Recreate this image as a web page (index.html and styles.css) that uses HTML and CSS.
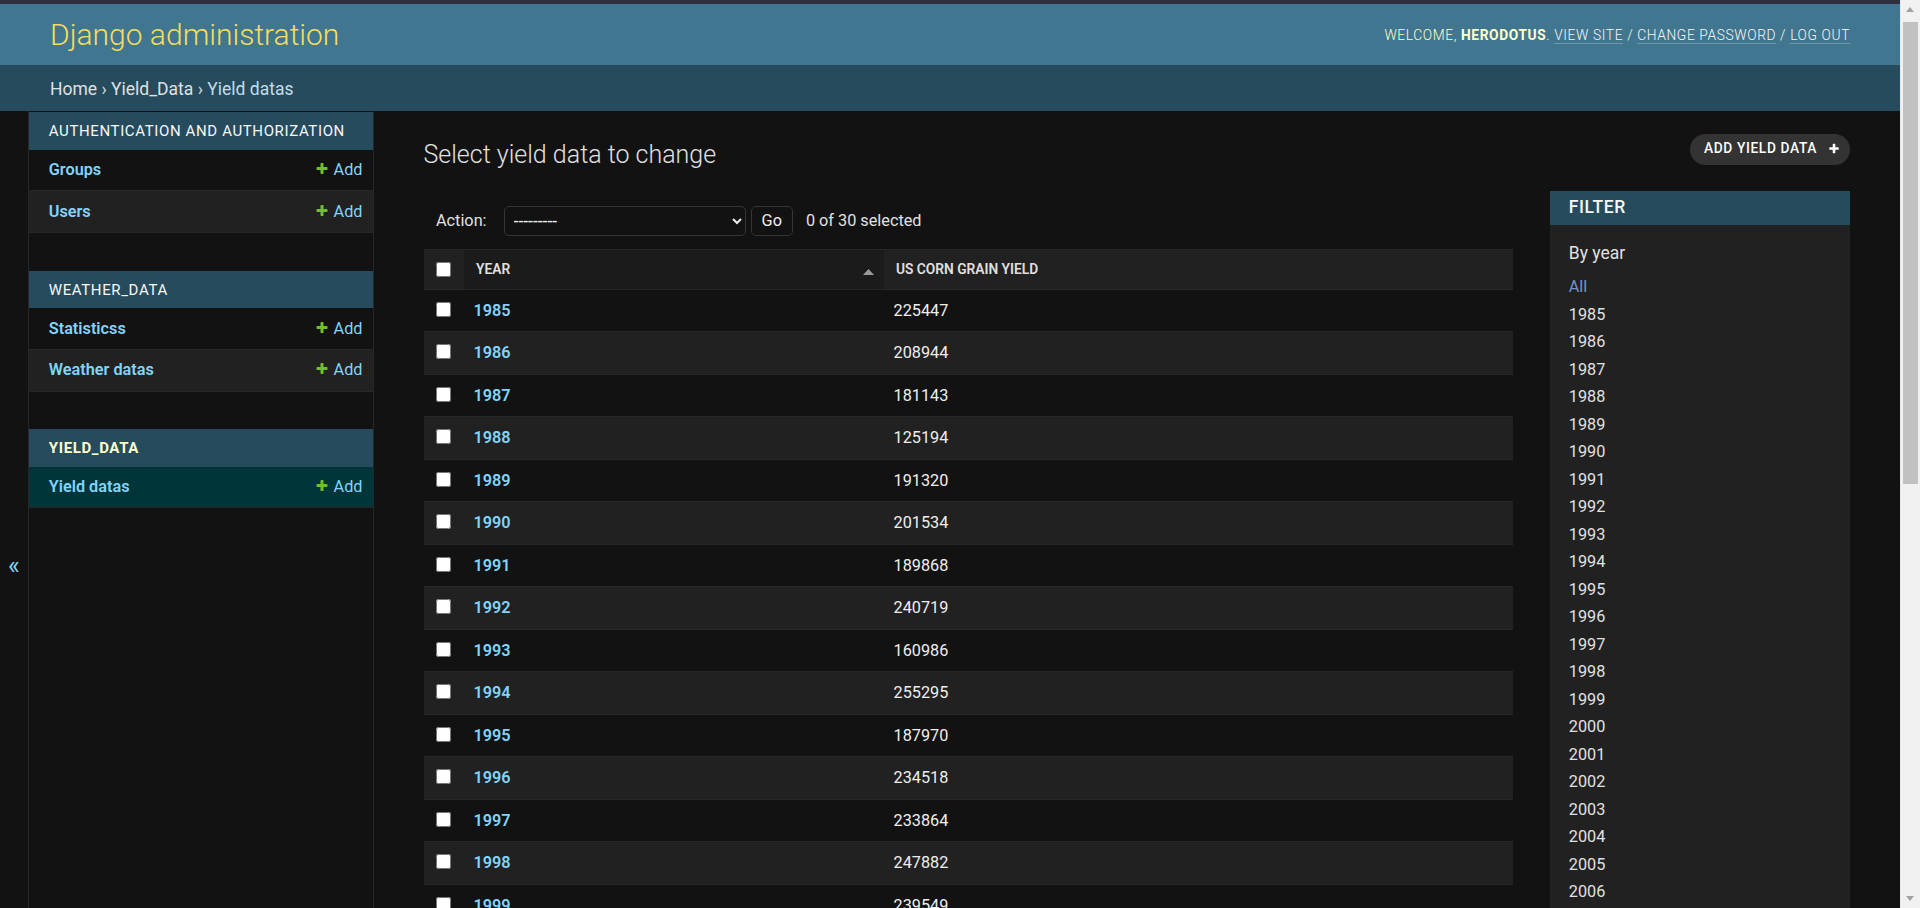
FILE: index.html
```html
<!DOCTYPE html>
<html lang="en">
<head>
<meta charset="utf-8">
<title>Select yield data to change | Django site admin</title>
<link rel="stylesheet" href="styles.css">
</head>
<body>
<div class="window-edge"></div>
<div class="container">
  <header class="header">
    <div class="branding"><h1 class="site-name"><a href="#">Django administration</a></h1></div>
    <div class="user-tools">Welcome, <strong>herodotus</strong>. <a href="#">View site</a> / <a href="#">Change password</a> / <a href="#">Log out</a></div>
  </header>
  <nav class="breadcrumbs"><a href="#">Home</a> › <a href="#">Yield_Data</a> › Yield datas</nav>
  <div class="main">
    <button class="toggle-nav" type="button">«</button>
    <nav class="sidebar">
      <table class="app-table">
        <caption><a href="#" class="section">Authentication and Authorization</a></caption>
        <tr><th><a href="#">Groups</a></th><td><a href="#" class="addlink"><svg class="plus" viewBox="0 0 1792 1792"><path fill="#70bf2b" d="M1600 736v192q0 40-28 68t-68 28h-416v416q0 40-28 68t-68 28h-192q-40 0-68-28t-28-68v-416h-416q-40 0-68-28t-28-68v-192q0-40 28-68t68-28h416v-416q0-40 28-68t68-28h192q40 0 68 28t28 68v416h416q40 0 68 28t28 68z"/></svg>Add</a></td></tr>
        <tr><th><a href="#">Users</a></th><td><a href="#" class="addlink"><svg class="plus" viewBox="0 0 1792 1792"><path fill="#70bf2b" d="M1600 736v192q0 40-28 68t-68 28h-416v416q0 40-28 68t-68 28h-192q-40 0-68-28t-28-68v-416h-416q-40 0-68-28t-28-68v-192q0-40 28-68t68-28h416v-416q0-40 28-68t68-28h192q40 0 68 28t28 68v416h416q40 0 68 28t28 68z"/></svg>Add</a></td></tr>
      </table>
      <table class="app-table">
        <caption><a href="#" class="section">Weather_Data</a></caption>
        <tr><th><a href="#">Statisticss</a></th><td><a href="#" class="addlink"><svg class="plus" viewBox="0 0 1792 1792"><path fill="#70bf2b" d="M1600 736v192q0 40-28 68t-68 28h-416v416q0 40-28 68t-68 28h-192q-40 0-68-28t-28-68v-416h-416q-40 0-68-28t-28-68v-192q0-40 28-68t68-28h416v-416q0-40 28-68t68-28h192q40 0 68 28t28 68v416h416q40 0 68 28t28 68z"/></svg>Add</a></td></tr>
        <tr><th><a href="#">Weather datas</a></th><td><a href="#" class="addlink"><svg class="plus" viewBox="0 0 1792 1792"><path fill="#70bf2b" d="M1600 736v192q0 40-28 68t-68 28h-416v416q0 40-28 68t-68 28h-192q-40 0-68-28t-28-68v-416h-416q-40 0-68-28t-28-68v-192q0-40 28-68t68-28h416v-416q0-40 28-68t68-28h192q40 0 68 28t28 68v416h416q40 0 68 28t28 68z"/></svg>Add</a></td></tr>
      </table>
      <table class="app-table current-app">
        <caption><a href="#" class="section">Yield_Data</a></caption>
        <tr class="current-model"><th><a href="#">Yield datas</a></th><td><a href="#" class="addlink"><svg class="plus" viewBox="0 0 1792 1792"><path fill="#70bf2b" d="M1600 736v192q0 40-28 68t-68 28h-416v416q0 40-28 68t-68 28h-192q-40 0-68-28t-28-68v-416h-416q-40 0-68-28t-28-68v-192q0-40 28-68t68-28h416v-416q0-40 28-68t68-28h192q40 0 68 28t28 68v416h416q40 0 68 28t28 68z"/></svg>Add</a></td></tr>
      </table>
    </nav>
    <div class="content">
      <div class="content-head">
        <h1 class="page-title">Select yield data to change</h1>
        <a href="#" class="add-btn">Add yield data <svg class="plus-white" viewBox="0 0 1792 1792"><path fill="#ffffff" d="M1600 736v192q0 40-28 68t-68 28h-416v416q0 40-28 68t-68 28h-192q-40 0-68-28t-28-68v-416h-416q-40 0-68-28t-28-68v-192q0-40 28-68t68-28h416v-416q0-40 28-68t68-28h192q40 0 68 28t28 68v416h416q40 0 68 28t28 68z"/></svg></a>
      </div>
      <div class="changelist">
        <div class="changelist-form">
          <div class="actions">
            <label class="action-label">Action: <select class="action-select"><option>---------</option><option>Delete selected yield datas</option></select></label>
            <button class="go-btn" type="button">Go</button>
            <span class="action-counter">0 of 30 selected</span>
          </div>
          <table class="result-list">
            <colgroup><col class="col-check"><col class="col-year"><col></colgroup>
            <thead>
              <tr>
                <th class="check-col"><div class="th-text th-check"><input type="checkbox"></div></th>
                <th class="sorted"><div class="th-text th-sorted"><a href="#">Year</a><svg class="sort-arrow" viewBox="0 0 11 6"><polygon points="0,6 5.5,0 11,6" fill="#9a9a9a"/></svg></div></th>
                <th><div class="th-text"><a href="#">US corn grain yield</a></div></th>
              </tr>
            </thead>
            <tbody>
              <tr><td class="cb"><input type="checkbox"></td><th><a href="#">1985</a></th><td>225447</td></tr>
              <tr><td class="cb"><input type="checkbox"></td><th><a href="#">1986</a></th><td>208944</td></tr>
              <tr><td class="cb"><input type="checkbox"></td><th><a href="#">1987</a></th><td>181143</td></tr>
              <tr><td class="cb"><input type="checkbox"></td><th><a href="#">1988</a></th><td>125194</td></tr>
              <tr><td class="cb"><input type="checkbox"></td><th><a href="#">1989</a></th><td>191320</td></tr>
              <tr><td class="cb"><input type="checkbox"></td><th><a href="#">1990</a></th><td>201534</td></tr>
              <tr><td class="cb"><input type="checkbox"></td><th><a href="#">1991</a></th><td>189868</td></tr>
              <tr><td class="cb"><input type="checkbox"></td><th><a href="#">1992</a></th><td>240719</td></tr>
              <tr><td class="cb"><input type="checkbox"></td><th><a href="#">1993</a></th><td>160986</td></tr>
              <tr><td class="cb"><input type="checkbox"></td><th><a href="#">1994</a></th><td>255295</td></tr>
              <tr><td class="cb"><input type="checkbox"></td><th><a href="#">1995</a></th><td>187970</td></tr>
              <tr><td class="cb"><input type="checkbox"></td><th><a href="#">1996</a></th><td>234518</td></tr>
              <tr><td class="cb"><input type="checkbox"></td><th><a href="#">1997</a></th><td>233864</td></tr>
              <tr><td class="cb"><input type="checkbox"></td><th><a href="#">1998</a></th><td>247882</td></tr>
              <tr><td class="cb"><input type="checkbox"></td><th><a href="#">1999</a></th><td>239549</td></tr>
              <tr><td class="cb"><input type="checkbox"></td><th><a href="#">2000</a></th><td>251854</td></tr>
              <tr><td class="cb"><input type="checkbox"></td><th><a href="#">2001</a></th><td>241377</td></tr>
              <tr><td class="cb"><input type="checkbox"></td><th><a href="#">2002</a></th><td>228967</td></tr>
              <tr><td class="cb"><input type="checkbox"></td><th><a href="#">2003</a></th><td>256229</td></tr>
              <tr><td class="cb"><input type="checkbox"></td><th><a href="#">2004</a></th><td>299876</td></tr>
              <tr><td class="cb"><input type="checkbox"></td><th><a href="#">2005</a></th><td>282263</td></tr>
              <tr><td class="cb"><input type="checkbox"></td><th><a href="#">2006</a></th><td>267503</td></tr>
              <tr><td class="cb"><input type="checkbox"></td><th><a href="#">2007</a></th><td>331177</td></tr>
              <tr><td class="cb"><input type="checkbox"></td><th><a href="#">2008</a></th><td>307142</td></tr>
              <tr><td class="cb"><input type="checkbox"></td><th><a href="#">2009</a></th><td>331921</td></tr>
              <tr><td class="cb"><input type="checkbox"></td><th><a href="#">2010</a></th><td>316165</td></tr>
              <tr><td class="cb"><input type="checkbox"></td><th><a href="#">2011</a></th><td>312789</td></tr>
              <tr><td class="cb"><input type="checkbox"></td><th><a href="#">2012</a></th><td>273192</td></tr>
              <tr><td class="cb"><input type="checkbox"></td><th><a href="#">2013</a></th><td>347152</td></tr>
              <tr><td class="cb"><input type="checkbox"></td><th><a href="#">2014</a></th><td>361091</td></tr>
            </tbody>
          </table>
          <p class="paginator">30 yield datas</p>
        </div>
        <aside class="filter">
          <h2 class="filter-title">Filter</h2>
          <h3 class="filter-by">By year</h3>
          <ul class="filter-list">
            <li class="selected"><a href="#">All</a></li>
            <li><a href="#">1985</a></li><li><a href="#">1986</a></li><li><a href="#">1987</a></li><li><a href="#">1988</a></li>
            <li><a href="#">1989</a></li><li><a href="#">1990</a></li><li><a href="#">1991</a></li><li><a href="#">1992</a></li>
            <li><a href="#">1993</a></li><li><a href="#">1994</a></li><li><a href="#">1995</a></li><li><a href="#">1996</a></li>
            <li><a href="#">1997</a></li><li><a href="#">1998</a></li><li><a href="#">1999</a></li><li><a href="#">2000</a></li>
            <li><a href="#">2001</a></li><li><a href="#">2002</a></li><li><a href="#">2003</a></li><li><a href="#">2004</a></li>
            <li><a href="#">2005</a></li><li><a href="#">2006</a></li><li><a href="#">2007</a></li><li><a href="#">2008</a></li>
            <li><a href="#">2009</a></li><li><a href="#">2010</a></li><li><a href="#">2011</a></li><li><a href="#">2012</a></li>
            <li><a href="#">2013</a></li><li><a href="#">2014</a></li>
          </ul>
        </aside>
      </div>
    </div>
  </div>
</div>
<div class="scrollbar" aria-hidden="true">
  <span class="sb-up"></span>
  <span class="sb-thumb"></span>
  <span class="sb-down"></span>
</div>
</body>
</html>
```
FILE: styles.css
```css
html {
  background: #121212;
}
body {
  margin: 0;
  padding-right: 20px;
  font-family: Roboto, "Liberation Sans", Arial, sans-serif;
  font-size: 17.5px;
  color: #eeeeee;
  background: #121212;
}
a {
  color: #81d4fa;
  text-decoration: none;
}

/* window scrollbar drawn as overlay */
.scrollbar {
  position: fixed;
  top: 0;
  right: 0;
  width: 20px;
  height: 100vh;
  background: #f1f1f1;
  border-left: 1px solid #e8e8e8;
  box-sizing: border-box;
}
.sb-up,
.sb-down {
  position: absolute;
  left: 5px;
  width: 0;
  height: 0;
  border-left: 4.5px solid transparent;
  border-right: 4.5px solid transparent;
}
.sb-up {
  top: 7px;
  border-bottom: 5px solid #a3a3a3;
}
.sb-down {
  bottom: 7px;
  border-top: 5px solid #a3a3a3;
}
.sb-thumb {
  position: absolute;
  top: 22px;
  left: 2px;
  width: 15px;
  height: 462px;
  background: #c1c1c1;
}

.window-edge {
  height: 4px;
  background: #2f303d;
}

/* header */
.header {
  display: flex;
  justify-content: space-between;
  align-items: center;
  padding: 12.5px 50px;
  background: #417690;
  color: #ffffcc;
}
.site-name {
  margin: 0;
  font-size: 30px;
  font-weight: 300;
  line-height: 36px;
}
.site-name a {
  color: #f5dd5d;
}
.user-tools {
  font-size: 13.75px;
  letter-spacing: 0.625px;
  text-transform: uppercase;
  font-weight: 300;
  color: #ffffcc;
}
.user-tools strong {
  font-weight: 700;
}
.user-tools a {
  color: #f7f7f7;
  border-bottom: 1.25px solid rgba(255, 255, 255, 0.25);
}

.breadcrumbs {
  background: #264b5d;
  padding: 14px 50px 11px;
  color: #c4dce8;
  font-size: 17.5px;
  line-height: 21px;
}
.breadcrumbs a {
  color: #e0e0e0;
}

/* main */
.main {
  display: flex;
}
.toggle-nav {
  position: sticky;
  top: 0;
  align-self: flex-start;
  box-sizing: border-box;
  height: 100vh;
  flex: 0 0 28.75px;
  width: 28.75px;
  padding: 0;
  border: 0;
  border-right: 1.25px solid #272727;
  background: #121212;
  color: #81d4fa;
  font-family: Roboto, "Liberation Sans", Arial, sans-serif;
  font-size: 25px;
  display: flex;
  align-items: center;
  justify-content: center;
}
.sidebar {
  position: sticky;
  top: 0;
  align-self: flex-start;
  height: 100vh;
  flex: 0 0 343.75px;
  border-top: 1.25px solid transparent;
  border-right: 1.25px solid #272727;
  background: #121212;
}
.app-table {
  width: 100%;
  border-collapse: collapse;
  margin-bottom: 37.5px;
}
.app-table caption {
  text-align: left;
  padding: 11px 10px 9px 20px;
  background: #264b5d;
  font-size: 15px;
  line-height: 17.5px;
  letter-spacing: 0.625px;
  text-transform: uppercase;
  font-weight: 400;
}
.app-table caption a {
  color: #f7f7f7;
}
.current-app caption a {
  color: #ffffcc;
  font-weight: 700;
}
.app-table th,
.app-table td {
  font-size: 16.25px;
  line-height: 20.75px;
  padding: 10.5px 10px 9.5px;
  border-bottom: 1.25px solid #272727;
  vertical-align: top;
}
.app-table th {
  text-align: left;
  width: 100%;
  padding-left: 20px;
  font-weight: 600;
}
.app-table td {
  white-space: nowrap;
  text-align: right;
}
.app-table tr:nth-child(even) {
  background: #212121;
}
.app-table tr.current-model {
  background: #00363a;
}
.plus {
  width: 14px;
  height: 14px;
  margin-right: 5px;
  vertical-align: -1px;
}

/* content */
.content {
  flex: 1 1 auto;
  min-width: 0;
  padding: 28.5px 50px 25px;
}
.content-head {
  display: flex;
  justify-content: space-between;
  align-items: flex-start;
}
.page-title {
  margin: 0 0 22.5px;
  font-size: 25px;
  line-height: 29px;
  font-weight: 300;
  color: #e0e0e0;
}
.add-btn {
  margin-top: -6px;
  display: inline-flex;
  align-items: center;
  gap: 11px;
  padding: 3.75px 10px 3.75px 14px;
  line-height: 23.5px;
  background: #333333;
  color: #ffffff;
  font-size: 13.75px;
  font-weight: 500;
  letter-spacing: 0.625px;
  text-transform: uppercase;
  border-radius: 18.75px;
}
.plus-white {
  width: 12px;
  height: 12px;
}

.changelist {
  display: flex;
  align-items: flex-start;
}
.changelist-form {
  flex: 1 1 auto;
  min-width: 0;
}
.actions {
  padding: 15px 12.5px 12.5px;
  line-height: 30px;
  color: #e0e0e0;
  display: flex;
  align-items: center;
}
.action-label {
  font-size: 16.25px;
  display: flex;
  align-items: center;
}
.action-select {
  box-sizing: border-box;
  width: 242px;
  height: 30px;
  margin: 0 0 0 17px;
  padding: 0 0 0 5px;
  font-family: Roboto, "Liberation Sans", Arial, sans-serif;
  font-size: 17.5px;
  color: #eeeeee;
  background: #121212;
  border: 1.25px solid #353535;
  border-radius: 5px;
}
.go-btn {
  box-sizing: border-box;
  height: 30px;
  margin-left: 5px;
  padding: 5px 10px;
  font-family: Roboto, "Liberation Sans", Arial, sans-serif;
  font-size: 16.25px;
  line-height: 1;
  color: #eeeeee;
  background: #121212;
  border: 1.25px solid #353535;
  border-radius: 5px;
}
.action-counter {
  font-size: 16.25px;
  margin: 0 8px 0 13px;
}

.result-list {
  width: 100%;
  border-collapse: collapse;
  table-layout: fixed;
}
.col-check {
  width: 40px;
}
.col-year {
  width: 420px;
}
.result-list thead th {
  padding: 0;
  background: #212121;
  border-top: 1.25px solid #272727;
  border-bottom: 1.25px solid #272727;
  font-size: 13.75px;
  font-weight: 600;
  text-align: left;
  text-transform: uppercase;
  white-space: nowrap;
}
.result-list thead th.sorted {
  background: #1b1b1b;
}
.th-text {
  padding: 10px 12.5px;
  line-height: 19px;
  display: flex;
  align-items: center;
}
.th-text a {
  color: #e0e0e0;
}
.th-check {
  padding: 10px 0;
  justify-content: center;
}
.th-sorted {
  justify-content: space-between;
  padding-right: 10px;
}
.sort-arrow {
  width: 11px;
  height: 6px;
  margin-top: 6px;
}
input[type="checkbox"] {
  width: 15px;
  height: 15px;
  margin: 0;
}
.result-list tbody td,
.result-list tbody th {
  padding: 10px;
  font-size: 16.25px;
  line-height: 21.5px;
  border-bottom: 1.25px solid #272727;
  text-align: left;
  vertical-align: middle;
}
.result-list tbody th {
  font-weight: 600;
}
.result-list tbody td.cb {
  padding: 10px 0;
  text-align: center;
}
.result-list tbody td.cb input {
  vertical-align: -1px;
}
.result-list tbody tr:nth-child(even) {
  background: #212121;
}
.paginator {
  margin: 0;
  padding: 12.5px 0;
  font-size: 16.25px;
  line-height: 27.5px;
  color: #eeeeee;
  border-top: 1.25px solid #272727;
}

/* filter */
.filter {
  flex: 0 0 300px;
  margin-left: 37.5px;
  background: #212121;
}
.filter-title {
  margin: 0 0 15.5px;
  padding: 6.25px 18.75px;
  background: #264b5d;
  color: #f7f7f7;
  font-size: 17.5px;
  line-height: 21.5px;
  font-weight: 500;
  letter-spacing: 0.625px;
  text-transform: uppercase;
}
.filter-by {
  margin: 0 0 7.5px;
  padding: 0 18.75px;
  font-size: 17.5px;
  line-height: 25px;
  font-weight: 400;
  color: #e0e0e0;
}
.filter-list {
  margin: 6.25px 0;
  padding: 0 18.75px 18.75px;
  list-style: none;
  border-bottom: 1.25px solid #272727;
}
.filter-list li {
  padding: 1.25px 0;
  font-size: 16.25px;
  line-height: 25px;
}
.filter-list a {
  display: block;
  color: #e0e0e0;
}
.filter-list li.selected a {
  color: #6f94c6;
}
```
